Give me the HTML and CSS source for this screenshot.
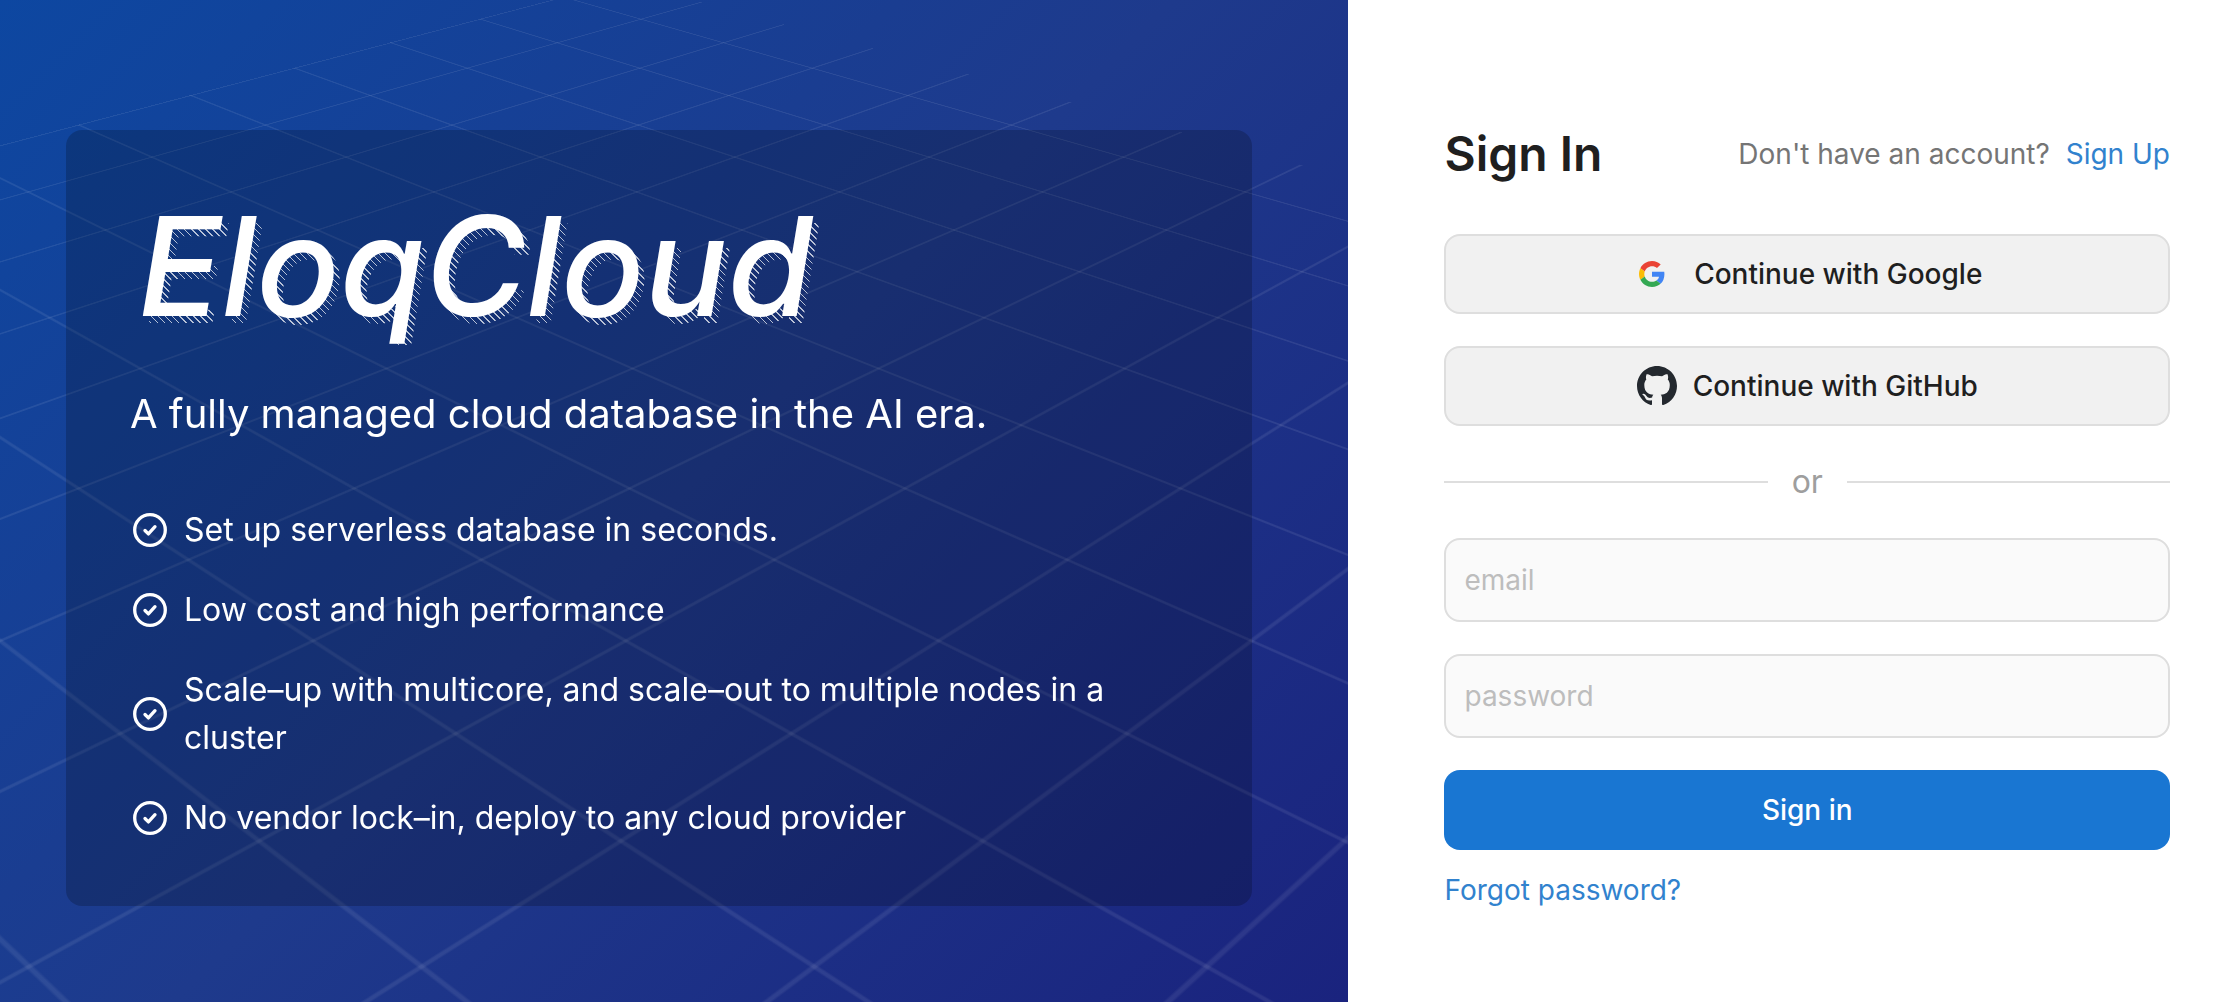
FILE: index.html
```html
<!DOCTYPE html>
<html lang="en">
<head>
<meta charset="utf-8">
<meta name="viewport" content="width=device-width, initial-scale=1">
<title>Sign In - EloqCloud</title>
<link rel="stylesheet" href="styles.css">
</head>
<body>
<svg class="sprite" aria-hidden="true">
  <symbol id="check" viewBox="0 0 38 38">
    <circle cx="20" cy="19" r="15.3" fill="none" stroke="currentColor" stroke-width="3.3"/>
    <path d="M15 19.5l3.4 3.4 6.6-7.2" fill="none" stroke="currentColor" stroke-width="3.3" stroke-linecap="round" stroke-linejoin="round"/>
  </symbol>
</svg>
<div class="page">
  <section class="hero">
    <div class="hero-grid" aria-hidden="true"></div>
    <div class="hero-card">
      <h1 class="brand" data-text="EloqCloud">EloqCloud</h1>
      <p class="tagline">A fully managed cloud database in the AI era.</p>
      <ul class="features">
        <li class="feature"><svg class="feature-icon" aria-hidden="true"><use href="#check"/></svg><span>Set up serverless database in seconds.</span></li>
        <li class="feature"><svg class="feature-icon" aria-hidden="true"><use href="#check"/></svg><span>Low cost and high performance</span></li>
        <li class="feature"><svg class="feature-icon" aria-hidden="true"><use href="#check"/></svg><span>Scale–up with multicore, and scale–out to multiple nodes in a cluster</span></li>
        <li class="feature"><svg class="feature-icon" aria-hidden="true"><use href="#check"/></svg><span>No vendor lock–in, deploy to any cloud provider</span></li>
      </ul>
    </div>
  </section>
  <main class="panel">
    <form class="signin">
      <header class="signin-head">
        <h2 class="signin-title">Sign In</h2>
        <p class="signup">Don't have an account? <a class="link signup-link" href="#signup">Sign Up</a></p>
      </header>
      <button class="btn btn-provider btn-google" type="button">
        <svg class="provider-icon" viewBox="-13 -13 74 74" aria-hidden="true">
          <path fill="#ea4335" d="M24 9.5c3.54 0 6.71 1.22 9.21 3.6l6.85-6.85C35.9 2.38 30.47 0 24 0 14.62 0 6.51 5.38 2.56 13.22l7.98 6.19C12.43 13.72 17.74 9.5 24 9.5z"/>
          <path fill="#4285f4" d="M46.98 24.55c0-1.57-.15-3.09-.38-4.55H24v9.02h12.94c-.58 2.96-2.26 5.48-4.78 7.18l7.73 6c4.51-4.18 7.09-10.36 7.09-17.65z"/>
          <path fill="#fbbc05" d="M10.53 28.59c-.48-1.45-.76-2.99-.76-4.59s.27-3.14.76-4.59l-7.98-6.19C.92 16.46 0 20.12 0 24c0 3.88.92 7.54 2.56 10.78l7.97-6.19z"/>
          <path fill="#34a853" d="M24 48c6.48 0 11.93-2.13 15.89-5.81l-7.73-6c-2.15 1.45-4.92 2.3-8.16 2.3-6.26 0-11.57-4.22-13.47-9.91l-7.98 6.19C6.51 42.62 14.62 48 24 48z"/>
        </svg>
        <span>Continue with Google</span>
      </button>
      <button class="btn btn-provider btn-github" type="button">
        <svg class="provider-icon" viewBox="0 0 16 16" aria-hidden="true">
          <path fill="#24292f" d="M8 0C3.58 0 0 3.58 0 8c0 3.54 2.29 6.53 5.47 7.59.4.07.55-.17.55-.38 0-.19-.01-.82-.01-1.49-2.01.37-2.53-.49-2.69-.94-.09-.23-.48-.94-.82-1.13-.28-.15-.68-.52-.01-.53.63-.01 1.08.58 1.23.82.72 1.21 1.87.87 2.33.66.07-.52.28-.87.51-1.07-1.78-.2-3.64-.89-3.64-3.95 0-.87.31-1.59.82-2.15-.08-.2-.36-1.02.08-2.12 0 0 .67-.21 2.2.82.64-.18 1.32-.27 2-.27s1.36.09 2 .27c1.53-1.04 2.2-.82 2.2-.82.44 1.1.16 1.92.08 2.12.51.56.82 1.27.82 2.15 0 3.07-1.87 3.75-3.65 3.95.29.25.54.73.54 1.48 0 1.07-.01 1.93-.01 2.2 0 .21.15.46.55.38A8.01 8.01 0 0 0 16 8c0-4.42-3.58-8-8-8z"/>
        </svg>
        <span>Continue with GitHub</span>
      </button>
      <div class="divider"><span>or</span></div>
      <input class="field" type="email" placeholder="email" aria-label="email">
      <input class="field" type="password" placeholder="password" aria-label="password">
      <button class="btn btn-primary" type="submit">Sign in</button>
      <p class="forgot"><a class="link" href="#forgot">Forgot password?</a></p>
    </form>
  </main>
</div>
</body>
</html>
```
FILE: styles.css
```css
* {
  box-sizing: border-box;
}

body {
  margin: 0;
  color: #1f1f1f;
  background: #fff;
  font-family: Inter, "Liberation Sans", sans-serif;
  font-size: 28px;
  line-height: 40px;
}

h1, h2, p, ul {
  margin: 0;
  padding: 0;
}

.sprite {
  display: none;
}

.page {
  display: flex;
  min-height: 100vh;
}

.hero {
  position: relative;
  flex: 0 0 60.2%;
  display: flex;
  flex-direction: column;
  padding: 130px 96px 96px 66px;
  overflow: hidden;
  color: #fff;
  background: linear-gradient(135deg, #0d47a1 0%, #1e3a8c 50%, #1a237e 100%);
}

/* Floor grid: 100px cells seen in perspective. */
.hero-grid {
  position: absolute;
  top: 0;
  left: 0;
  width: 1200px;
  height: 1100px;
  background-image:
    linear-gradient(rgba(255, 255, 255, 0.08) 2px, transparent 2px),
    linear-gradient(90deg, rgba(255, 255, 255, 0.08) 2px, transparent 2px);
  background-size: 100px 100px;
  background-position: 0 76px;
  transform-origin: 0 0;
  transform:
    matrix3d(0.5944, 0.229, 0, -0.00036, -1.0674, 0.229, 0, -0.00036, 0, 0, 1, 0, 723.5, 42.3, 0, 1)
    translate(-200px, -76px);
}

.hero-card {
  position: relative;
  padding: 64px;
  border-radius: 16px;
  background: rgba(0, 0, 0, 0.2);
}

.brand {
  position: relative;
  z-index: 0;
  padding-left: 8px;
  font-size: 138px;
  line-height: 144px;
  font-weight: 500;
  font-style: italic;
}

/* Hatched shadow cast down and to the right of the brand name. */
.brand::after {
  content: attr(data-text);
  position: absolute;
  z-index: -1;
  top: 7px;
  left: 14px;
  color: transparent;
  background: repeating-linear-gradient(45deg, rgba(255, 255, 255, 0.7) 0 1px, transparent 1px 5px);
  background-clip: text;
  -webkit-background-clip: text;
}

.tagline {
  margin-top: 48px;
  font-size: 40px;
  line-height: 56px;
}

.features {
  display: flex;
  flex-direction: column;
  gap: 32px;
  margin-top: 64px;
  list-style: none;
  font-size: 32px;
  line-height: 48px;
}

.feature {
  display: flex;
  align-items: center;
  gap: 16px;
}

.feature-icon {
  flex: none;
  width: 38px;
  height: 38px;
}

.panel {
  flex: 1;
  padding: 122px 70px 64px 96px;
}

.signin {
  display: flex;
  flex-direction: column;
}

.signin-head {
  display: flex;
  align-items: center;
  justify-content: space-between;
  height: 64px;
  margin-bottom: 48px;
}

.signin-title {
  font-size: 48px;
  line-height: 64px;
  font-weight: 600;
}

.signup {
  color: #757575;
}

.signup-link {
  margin-left: 8px;
}

.link {
  color: #3182ce;
  text-decoration: none;
}

.btn {
  display: flex;
  align-items: center;
  justify-content: center;
  height: 80px;
  border: 0;
  border-radius: 16px;
  font: inherit;
  font-weight: 500;
  cursor: pointer;
}

.btn-provider {
  margin-bottom: 32px;
  border: 2px solid #dedede;
  color: #1f1f1f;
  background: #f1f1f1;
}

.btn-google {
  gap: 22px;
}

.btn-github {
  gap: 16px;
}

.provider-icon {
  width: 40px;
  height: 40px;
}

.divider {
  display: flex;
  align-items: center;
  gap: 24px;
  height: 48px;
  margin-bottom: 32px;
  color: #9e9e9e;
  font-size: 32px;
}

.divider::before,
.divider::after {
  content: "";
  flex: 1;
  height: 2px;
  background: #dedede;
}

.field {
  width: 100%;
  height: 84px;
  margin-bottom: 32px;
  padding: 0 18px;
  border: 2px solid #dedede;
  border-radius: 16px;
  color: #1f1f1f;
  background: #fafafa;
  font: inherit;
}

.field::placeholder {
  color: #bdbdbd;
  opacity: 1;
}

.btn-primary {
  color: #fff;
  background: #1976d2;
}

.forgot {
  margin-top: 20px;
}
```
